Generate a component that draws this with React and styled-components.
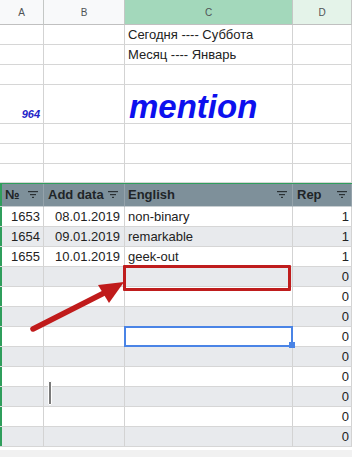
import React from "react";
import styled, { createGlobalStyle } from "styled-components";

const GlobalStyle = createGlobalStyle`
  html, body { margin: 0; padding: 0; }
  body {
    background: #f1f1f1;
    font-family: "Liberation Sans", Arial, sans-serif;
    color: #222;
  }
`;

const COLS = "44px 81px 168px 59px";

const Sheet = styled.div`
  position: relative;
  width: 352px;
  height: 450px;
  overflow: hidden;
  background: #fff;
`;

const Row = styled.div`
  display: grid;
  grid-template-columns: ${COLS};
  height: ${(p) => p.$h || 20}px;
  background: ${(p) => (p.$alt ? "#e8eaed" : "#fff")};
`;

const LetterCell = styled.div`
  box-sizing: border-box;
  display: flex;
  align-items: center;
  justify-content: center;
  font-size: 10px;
  color: #4f5356;
  border-right: 1px solid #c4c7c5;
  border-bottom: 1px solid #c0c0c0;
  background: ${(p) =>
    p.$state === "active" ? "#a3d8bb" : p.$state === "soft" ? "#e4f3e9" : "#f8f9fa"};
`;

const Cell = styled.div`
  position: relative;
  box-sizing: border-box;
  display: flex;
  align-items: flex-end;
  justify-content: ${(p) => (p.$right ? "flex-end" : "flex-start")};
  padding: 0 ${(p) => (p.$right ? p.$pr ?? 3 : 0)}px 2px ${(p) => (p.$right ? 0 : 3)}px;
  font-size: 13px;
  line-height: 15px;
  white-space: nowrap;
  overflow: visible;
  border-right: 1px solid #d3d3d3;
  border-bottom: 1px solid ${(p) => (p.$greenBottom ? "#2f9e5c" : "#d6d6d6")};
  ${(p) => (p.$frozen ? "box-shadow: inset 2px 0 0 #2f9e5c;" : "")}
  ${(p) =>
    p.$selected
      ? `
    z-index: 2;
    &::after {
      content: "";
      position: absolute;
      inset: -1px -1px -1px -1px;
      border: 2px solid #4a84e6;
    }
    &::before {
      content: "";
      position: absolute;
      right: -3px;
      bottom: -2px;
      width: 6px;
      height: 6px;
      background: #4a84e6;
      z-index: 3;
    }
  `
      : ""}
`;

const Big = styled.span`
  font-size: 33px;
  line-height: 34px;
  font-weight: bold;
  font-style: italic;
  color: #0d10ee;
  margin-left: 1px;
  margin-bottom: -3px;
`;

const SmallNum = styled.span`
  font-size: 11px;
  font-weight: bold;
  font-style: italic;
  color: #2424c8;
  margin-bottom: -1px;
`;

const HeadRow = styled.div`
  display: grid;
  grid-template-columns: ${COLS};
  height: 24px;
  border-top: 1px solid #2f9e5c;
  box-sizing: border-box;
  background: #7e909a;
`;

const HeadCell = styled.div`
  box-sizing: border-box;
  display: flex;
  align-items: center;
  justify-content: space-between;
  padding: 0 ${(p) => p.$pr ?? 5}px 1px ${(p) => p.$pl ?? 3}px;
  font-size: 13px;
  font-weight: bold;
  color: #1f2528;
  border-right: 1px solid #95a3ab;
  border-bottom: 1px solid #c9cfd2;
  ${(p) => (p.$frozen ? "box-shadow: inset 2px 0 0 #2f9e5c;" : "")}
`;

const FilterSvg = styled.svg`
  flex: none;
  display: block;
`;

const Filter = () => (
  <FilterSvg width="10" height="7" viewBox="0 0 10 7">
    <rect x="0" y="0" width="10" height="1.2" fill="#2a3134" />
    <rect x="2" y="3" width="6" height="1.2" fill="#2a3134" />
    <rect x="4" y="5.8" width="2" height="1.2" fill="#2a3134" />
  </FilterSvg>
);

const RedBox = styled.div`
  position: absolute;
  left: 123px;
  top: 265px;
  width: 168px;
  height: 26px;
  box-sizing: border-box;
  border: 3px solid #bf1d1d;
  border-radius: 1px;
  z-index: 4;
`;

const Overlay = styled.svg`
  position: absolute;
  left: 0;
  top: 0;
  z-index: 5;
  pointer-events: none;
`;

const Caret = styled.div`
  position: absolute;
  left: 48px;
  top: 381px;
  width: 2px;
  height: 22px;
  background: #7a7a7a;
  border: 1px solid #fff;
  border-radius: 1px;
  z-index: 5;
`;

const Bottom = styled.div`
  height: 3px;
  border-bottom: 1px solid #d0d0d0;
  background: #fff;
`;

const dataRows = [
  ["1653", "08.01.2019", "non-binary", "1"],
  ["1654", "09.01.2019", "remarkable", "1"],
  ["1655", "10.01.2019", "geek-out", "1"],
  ["", "", "", "0"],
  ["", "", "", "0"],
  ["", "", "", "0"],
  ["", "", "", "0"],
  ["", "", "", "0"],
  ["", "", "", "0"],
  ["", "", "", "0"],
  ["", "", "", "0"],
  ["", "", "", "0"],
];

function TopRow({ h, a, c, greenBottom }) {
  return (
    <Row $h={h}>
      <Cell $right $greenBottom={greenBottom}>{a}</Cell>
      <Cell $greenBottom={greenBottom} />
      <Cell $greenBottom={greenBottom}>{c}</Cell>
      <Cell $greenBottom={greenBottom} />
    </Row>
  );
}

export default function App() {
  return (
    <>
      <GlobalStyle />
      <Sheet>
        <Row $h={25}>
          <LetterCell>A</LetterCell>
          <LetterCell>B</LetterCell>
          <LetterCell $state="active">C</LetterCell>
          <LetterCell $state="soft">D</LetterCell>
        </Row>
        <TopRow c="Сегодня ---- Суббота" />
        <TopRow c="Месяц ---- Январь" />
        <TopRow />
        <TopRow h={39} a={<SmallNum>964</SmallNum>} c={<Big>mention</Big>} />
        <TopRow />
        <TopRow />
        <TopRow h={19} />
        <HeadRow>
          <HeadCell $frozen $pl={5}>
            №<Filter />
          </HeadCell>
          <HeadCell $pl={4} $pr={6}>
            Add data<Filter />
          </HeadCell>
          <HeadCell>
            English<Filter />
          </HeadCell>
          <HeadCell $pl={4} $pr={4}>
            Rep<Filter />
          </HeadCell>
        </HeadRow>
        {dataRows.map((r, i) => (
          <Row key={i} $alt={i % 2 === 1}>
            <Cell $right $frozen>{r[0]}</Cell>
            <Cell $right $pr={4}>{r[1]}</Cell>
            <Cell $selected={i === 6}>{r[2]}</Cell>
            <Cell $right $pr={2}>{r[3]}</Cell>
          </Row>
        ))}
        <Bottom />
        <RedBox />
        <Overlay width="352" height="450" viewBox="0 0 352 450">
          <line
            x1="33"
            y1="329"
            x2="106"
            y2="292"
            stroke="#c01b1b"
            strokeWidth="5.5"
            strokeLinecap="round"
          />
          <polygon points="124,282 98,285 109,303" fill="#c01b1b" />
        </Overlay>
        <Caret />
      </Sheet>
    </>
  );
}
